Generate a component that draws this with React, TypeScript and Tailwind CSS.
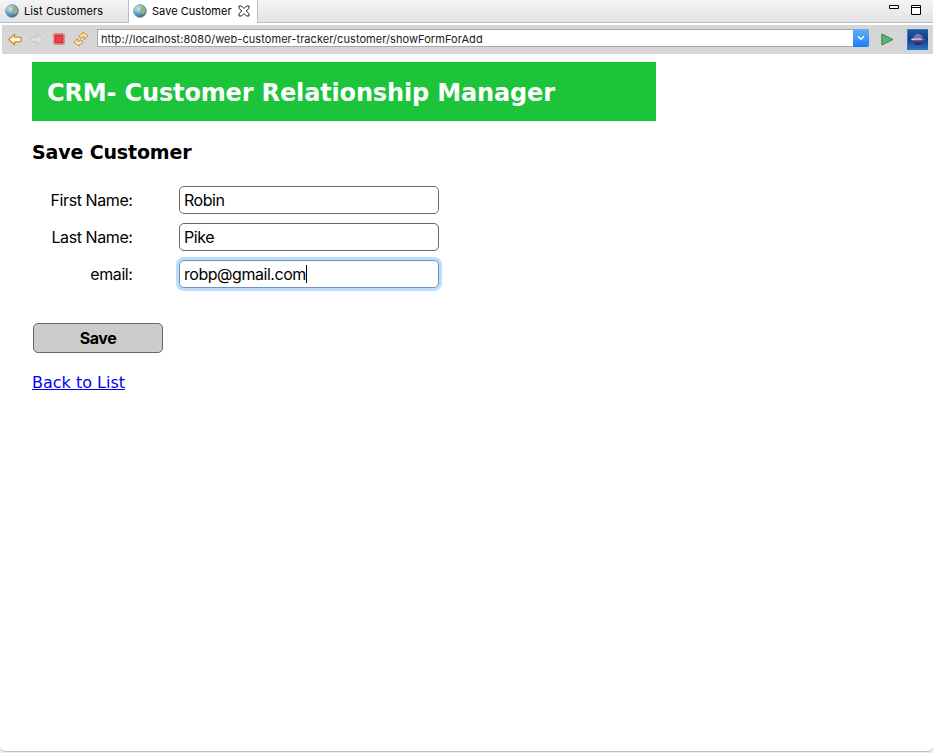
import React from "react";

function Globe() {
  return (
    <svg width="14" height="14" viewBox="0 0 14 14" className="shrink-0">
      <defs>
        <radialGradient id="sea" cx="0.35" cy="0.3" r="0.8">
          <stop offset="0" stopColor="#d3ecf8" />
          <stop offset="0.5" stopColor="#68a8d4" />
          <stop offset="1" stopColor="#28567f" />
        </radialGradient>
      </defs>
      <circle cx="7" cy="7" r="6.4" fill="url(#sea)" stroke="#6d8ea5" strokeWidth="0.6" />
      <path d="M2 3.4 4.5 1.4 6.4 1.8 5.8 3.8 4.2 5 3.4 6.6 1.2 5.6Z" fill="#b4d0b4" />
      <path d="M8.4 3.2 10.6 2.8 12.6 5.4 12.4 8 10.4 10.6 9.2 9 9 7.2 7.8 5.8Z" fill="#a5b070" />
      <path d="M3.6 8.8 5.8 9.6 5.4 12 4 11Z" fill="#6e9a74" />
    </svg>
  );
}

const arrow = "M1.2 6.5 7 1.2V4.2H12.2Q13.6 4.2 13.6 5.4V7.6Q13.6 8.8 12.2 8.8H7V11.8Z";

function Toolbar() {
  return (
    <div className="ml-0.5 flex h-[29px] items-center bg-[#d6d6d6] pl-[5px]">
      <svg width="16" height="13" viewBox="0 0 15 13" className="-mt-px shrink-0">
        <path d={arrow} fill="#fff8d2" stroke="#c98f2a" strokeWidth="1.2" strokeLinejoin="round" />
      </svg>
      <svg width="16" height="13" viewBox="0 0 15 13" className="-mt-px ml-1.5 shrink-0 -scale-x-100">
        <path d={arrow} fill="#e0e0e0" stroke="#c2c2c2" strokeLinejoin="round" />
      </svg>
      <svg width="12" height="12" viewBox="0 0 12 12" className="-mt-px ml-2 shrink-0">
        <rect x="0.5" y="0.5" width="11" height="11" rx="1" fill="#f3b4b4" stroke="#d98a8a" />
        <rect x="2" y="2" width="8" height="8" fill="#e5434b" stroke="#cb2430" />
      </svg>
      <svg width="16" height="16" viewBox="0 0 16 16" className="-mt-px ml-2 shrink-0">
        <g fill="#ffe9a0" stroke="#c08a2c" strokeWidth="0.9" strokeLinejoin="round">
          <path d="M6.2 5.8Q6.8 2.6 10 2.4L10 .9 15 4.8 11.6 8.6 11.2 5.6Q9.4 5 8.7 7.2Z" />
          <path d="M9.8 10.2Q9.2 13.4 6 13.6L6 15.1 1 11.2 4.4 7.4 4.8 10.4Q6.6 11 7.3 8.8Z" />
        </g>
      </svg>
      <div className="-mt-[3px] ml-2 flex h-[18px] w-[772px] shrink-0 border border-[#a9a9a9] bg-white">
        <div className="flex-1 pl-[3px] font-[Inter,sans-serif] text-[11px] leading-[18px] tracking-[0.06px] text-[#202020]">
          http://localhost:8080/web-customer-tracker/customer/showFormForAdd
        </div>
        <div className="-my-px -mr-px flex w-4 items-center justify-center rounded-r-[3px] bg-linear-to-b from-[#65adf8] to-[#167bfb]">
          <svg width="8" height="6" viewBox="0 0 8 6">
            <path d="M1 1.3 4 4.3 7 1.3" fill="none" stroke="white" strokeWidth="1.4" />
          </svg>
        </div>
      </div>
      <svg width="13" height="13" viewBox="0 0 13 13" className="-mt-px ml-3 shrink-0">
        <path d="M.8 1 12 6.5.8 12Z" fill="#5fb072" stroke="#2e8b45" strokeLinejoin="round" />
      </svg>
      <svg width="21" height="21" viewBox="0 0 21 21" className="ml-[13px] shrink-0">
        <defs>
          <linearGradient id="sky" x1="0" y1="0" x2="0" y2="1">
            <stop offset="0" stopColor="#1a5cab" />
            <stop offset="0.5" stopColor="#183c85" />
            <stop offset="1" stopColor="#2878c8" />
          </linearGradient>
          <linearGradient id="orb" x1="0" y1="0" x2="0" y2="1">
            <stop offset="0" stopColor="#8d86c4" />
            <stop offset="1" stopColor="#281a50" />
          </linearGradient>
        </defs>
        <rect width="21" height="21" fill="url(#sky)" />
        <path d="M.5 21V.5H21" fill="none" stroke="#3478c4" />
        <circle cx="11" cy="10.5" r="5.4" fill="url(#orb)" />
        <path d="M3 10.5Q11 8.6 19 10.5Q11 13 3 10.5Z" fill="#7a62a8" />
        <path d="M4.5 10.5Q10 9.4 14.5 10.3" fill="none" stroke="#f0d4f0" strokeWidth="1.3" />
      </svg>
    </div>
  );
}

function Field({ label, value, focused }: { label: string; value: string; focused?: boolean }) {
  return (
    <div className="flex h-[37px] items-start font-[Inter,sans-serif] text-[16px] leading-[26px] text-black">
      <div className="mr-[46.5px] w-[100.5px] pt-px text-right tracking-[-0.42px]">{label}</div>
      <div
        className={
          "flex h-7 w-[260px] items-center rounded-[5px] border bg-white pl-1 tracking-[-0.46px] " +
          (focused ? "border-[#6f93bd] ring-3 ring-[#bddcfe]" : "border-[#666]")
        }
      >
        {value}
        {focused && <span className="h-[18px] w-px bg-black" />}
      </div>
    </div>
  );
}

export default function App() {
  return (
    <div className="flex h-[753px] w-[933px] flex-col overflow-hidden bg-[#ececec] pb-px">
      <div className="flex h-[23px] shrink-0 border-b border-[#b5bdd0] bg-linear-to-b from-[#f4f4f4] to-[#e3e3e3] font-[Inter,sans-serif] text-[11px] leading-[22px] text-black">
        <div className="flex w-[128px] items-center pl-[5px]">
          <Globe />
          <span className="ml-[5px] tracking-[0.1px]">List Customers</span>
        </div>
        <div className="-mb-px flex h-[23px] w-[130px] items-center border-x border-[#b5bdd0] bg-white pb-px pl-1">
          <Globe />
          <span className="ml-[5px] tracking-[0.03px]">Save Customer</span>
          <svg width="12" height="12" viewBox="0 0 12 12" className="ml-1.5">
            <path d="M1 1H3.5L6 3.5 8.5 1H11V3.2L8.3 6 11 8.8V11H8.5L6 8.5 3.5 11H1V8.8L3.7 6 1 3.2Z" fill="white" stroke="#222" />
          </svg>
        </div>
        <svg width="36" height="20" viewBox="0 0 36 20" className="mr-[9px] ml-auto">
          <path d="M1.5 5.5H10.5V8.5H1.5Z M23.5 5.5H32.5V14.5H23.5Z M23.5 7.5H32.5" fill="white" stroke="black" />
        </svg>
      </div>
      <div className="h-[2px] shrink-0 bg-white" />
      <div className="flex flex-1 flex-col rounded-b-md border-b border-[#c0c0c0] bg-white">
        <Toolbar />
        <main className="flex flex-col items-start pt-2 pl-8 font-[Verdana,'DejaVu_Sans',sans-serif]">
          <div className="h-[59px] w-[624px] bg-[#1cc43a] pl-[15px] text-[24px] leading-[62px] font-bold tracking-[-0.15px] whitespace-nowrap text-white">
            CRM- Customer Relationship Manager
          </div>
          <h3 className="mt-[18px] mb-[21px] text-[19px] leading-[26px] font-bold tracking-[-0.15px] text-black">Save Customer</h3>
          <Field label="First Name:" value="Robin" />
          <Field label="Last Name:" value="Pike" />
          <Field label="email:" value="robp@gmail.com" focused />
          <button className="mt-[26px] ml-px h-[30px] w-[130px] rounded-[5px] border border-[#666] bg-[#ccc] font-[Inter,sans-serif] text-[16px] leading-[28px] font-bold tracking-[-0.5px] text-black">
            Save
          </button>
          <a href="#" className="mt-[18px] text-[16px] leading-6 text-[#0000ee] underline">
            Back to List
          </a>
        </main>
      </div>
    </div>
  );
}
